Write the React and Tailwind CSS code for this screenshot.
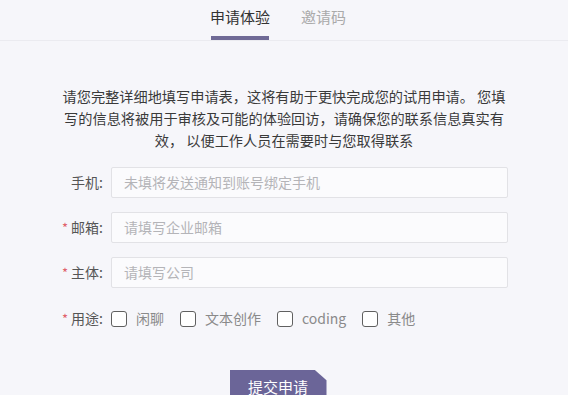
import React from "react";

const font = { fontFamily: '"Noto Sans CJK SC", "Noto Sans", sans-serif' };

function Checkbox({ label }) {
  return (
    <label className="flex items-center">
      <span className="w-[16px] h-[16px] border border-[#606060] rounded-[3px] bg-white" />
      <span className="ml-[9px] text-[14px] text-[#8a8a8a]">{label}</span>
    </label>
  );
}

function Row({ label, required, placeholder }) {
  return (
    <div className="flex items-center h-[31px]">
      <div className="w-[111px] flex justify-end items-center pr-[8px] text-[14px] text-[#555]">
        {required && <span className="text-[#e0606a] mr-[3px] text-[13px]">*</span>}
        <span>{label}:</span>
      </div>
      <div className="w-[397px] h-[31px] border border-[#e2e2e6] bg-[#fbfbfd] rounded-[2px] flex items-center px-[12px] text-[14px] text-[#b4b4b8]">
        {placeholder}
      </div>
    </div>
  );
}

export default function App() {
  return (
    <div className="w-[568px] h-[395px] overflow-hidden bg-[#f6f6fa]" style={font}>
      <div className="h-[41px] border-b border-[#ebebf0] flex justify-center">
        <div className="flex gap-[31px] ml-[-12px]">
          <div className="flex flex-col items-center">
            <div className="h-[36px] pt-[5px] text-[15px] text-[#333] leading-[24px]">申请体验</div>
            <div className="w-[58px] h-[4px] bg-[#6f6a96]" />
          </div>
          <div className="h-[36px] pt-[5px] text-[15px] text-[#aaa] leading-[24px]">邀请码</div>
        </div>
      </div>
      <div className="pt-[44px] px-[58px] text-center text-[14.2px] leading-[22px] text-[#3a3a3a]">
        请您完整详细地填写申请表，这将有助于更快完成您的试用申请。 您填写的信息将被用于审核及可能的体验回访，请确保您的联系信息真实有效， 以便工作人员在需要时与您取得联系
      </div>
      <div className="mt-[16px] flex flex-col gap-[14px]">
        <Row label="手机" placeholder="未填将发送通知到账号绑定手机" />
        <Row label="邮箱" required placeholder="请填写企业邮箱" />
        <Row label="主体" required placeholder="请填写公司" />
        <div className="flex items-center h-[31px] mt-[1px]">
          <div className="w-[111px] flex justify-end items-center pr-[8px] text-[14px] text-[#555]">
            <span className="text-[#e0606a] mr-[3px] text-[13px]">*</span>
            <span>用途:</span>
          </div>
          <div className="flex items-center gap-[16px]">
            <Checkbox label="闲聊" />
            <Checkbox label="文本创作" />
            <Checkbox label="coding" />
            <Checkbox label="其他" />
          </div>
        </div>
      </div>
      <div className="mt-[36px] flex justify-center ml-[-12px]">
        <div
          className="w-[97px] h-[34px] bg-[#6b6598] text-white text-[15px] flex items-start justify-center pt-[6px]"
          style={{ clipPath: "polygon(0 0, 88% 0, 100% 30%, 100% 100%, 0 100%)" }}
        >
          提交申请
        </div>
      </div>
    </div>
  );
}
